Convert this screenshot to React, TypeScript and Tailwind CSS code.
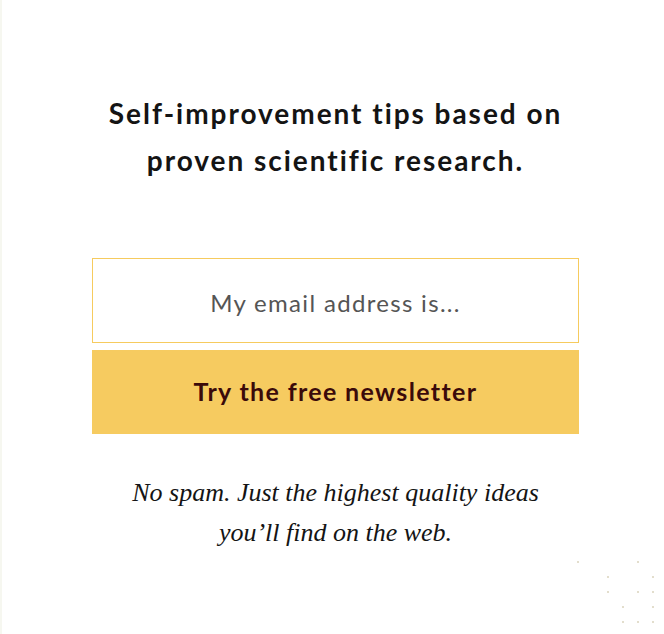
export default function App() {
  // dot pattern in the bottom right corner: [col, row] on a 15px grid
  const dots = [
    [0, 0], [4, 0],
    [2, 1], [5, 1],
    [2, 2], [4, 2], [5, 2],
    [3, 3], [5, 3],
    [3, 4], [4, 4], [5, 4],
  ];

  return (
    <div className="relative h-[634px] w-[664px] overflow-hidden bg-white">
      <div className="absolute left-0 top-0 h-full w-[2px] bg-[#f6f7f0]" />
      <div className="flex flex-col pl-[92px] pr-[85px] pt-[90px]">
        <h1 className="text-center font-['Lato',sans-serif] text-[28px] font-bold leading-[47px] tracking-[0.07em] text-[#141414]">
          Self-improvement tips based on
          <br />
          proven scientific research.
        </h1>
        <input
          type="email"
          placeholder="My email address is..."
          className="mt-[74px] h-[85px] w-full border border-[#f6cb5e] bg-white pt-[3px] text-center font-['Lato',sans-serif] text-[24px] tracking-[0.055em] text-[#444] outline-none placeholder:text-[#555]"
        />
        <button
          type="button"
          className="mt-[7px] h-[84px] w-full bg-[#f6cb60] font-['Lato',sans-serif] text-[25px] font-bold tracking-[0.054em] text-[#3b0a0a]"
        >
          Try the free newsletter
        </button>
        <p className="mt-[39px] text-center font-['Liberation_Serif',serif] text-[26px] italic leading-[40px] text-[#141414]">
          No spam. Just the highest quality ideas
          <br />
          you’ll find on the web.
        </p>
      </div>
      {dots.map(([c, r]) => (
        <span
          key={`${c}-${r}`}
          className="absolute h-[2px] w-[2px] bg-[#e3decd]"
          style={{ left: 577 + c * 15, top: 561 + r * 15 }}
        />
      ))}
    </div>
  );
}
